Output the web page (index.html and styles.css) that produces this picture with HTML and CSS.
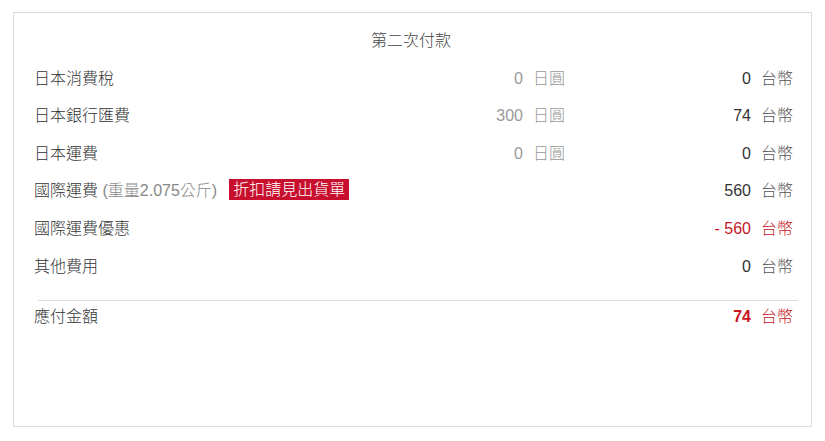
FILE: index.html
```html
<!DOCTYPE html>
<html lang="zh-Hant">
<head>
	<meta charset="UTF-8">
	<title>第二次付款</title>
	<link rel="stylesheet" href="styles.css">
</head>
<body>
	<div class="wrapper">
		<div class="title">第二次付款</div>
		<!--費用明細-->
		<div class="row">
			<div class="label">日本消費稅</div>
			<div class="jpy">0</div>
			<div class="unit gray">日圓</div>
			<div class="twd">0</div>
			<div class="unit">台幣</div>
		</div>
		<div class="row">
			<div class="label">日本銀行匯費</div>
			<div class="jpy">300</div>
			<div class="unit gray">日圓</div>
			<div class="twd">74</div>
			<div class="unit">台幣</div>
		</div>
		<div class="row">
			<div class="label">日本運費</div>
			<div class="jpy">0</div>
			<div class="unit gray">日圓</div>
			<div class="twd">0</div>
			<div class="unit">台幣</div>
		</div>
		<div class="row">
			<div class="label">國際運費 <span class="weight">(重量2.075公斤)</span><span class="badge">折扣請見出貨單</span></div>
			<div class="jpy"></div>
			<div class="unit"></div>
			<div class="twd">560</div>
			<div class="unit">台幣</div>
		</div>
		<div class="row">
			<div class="label">國際運費優惠</div>
			<div class="jpy"></div>
			<div class="unit"></div>
			<div class="twd red">- 560</div>
			<div class="unit red">台幣</div>
		</div>
		<div class="row">
			<div class="label">其他費用</div>
			<div class="jpy"></div>
			<div class="unit"></div>
			<div class="twd">0</div>
			<div class="unit">台幣</div>
		</div>
		<hr class="line">
		<!--合計-->
		<div class="row total">
			<div class="label">應付金額</div>
			<div class="jpy"></div>
			<div class="unit"></div>
			<div class="twd red bold">74</div>
			<div class="unit red">台幣</div>
		</div>
	</div>
</body>
</html>
```

FILE: styles.css
```css
body{
	margin:0;
	background:#fff;
	font-family:"Liberation Sans", "Noto Sans CJK TC", sans-serif;
	font-size:16px;
	color:#333;
}
.wrapper{
	margin:12px 13px;
	height:415px;
	border:1px solid #dcdcdc;
	padding:9px 19px 0 20px;
	box-sizing:border-box;
}
.title{
	text-align:center;
	line-height:37.6px;
	margin-left:-4px;
	color:#444;
	font-weight:300;
}
.row{
	display:grid;
	grid-template-columns:1fr 100px 41px 187px 41px;
	line-height:37.6px;
}
.label{
	font-weight:300;
}
.jpy,.twd{
	text-align:right;
}
.jpy{
	color:#999;
}
.unit{
	padding-left:10px;
	white-space:nowrap;
	color:#555;
	font-weight:300;
}
.gray{
	color:#999;
}
.red{
	color:#c8161e;
}
.bold{
	font-weight:bold;
}
.weight{
	color:#888;
}
.badge{
	display:inline-block;
	margin-left:12px;
	padding:0 4px;
	line-height:21px;
	background:#c8102e;
	color:#fff;
	vertical-align:1px;
}
.line{
	border:0;
	border-top:1px solid #ddd;
	margin:15px -6px 0 4px;
}
.total{
	line-height:32px;
}
```
